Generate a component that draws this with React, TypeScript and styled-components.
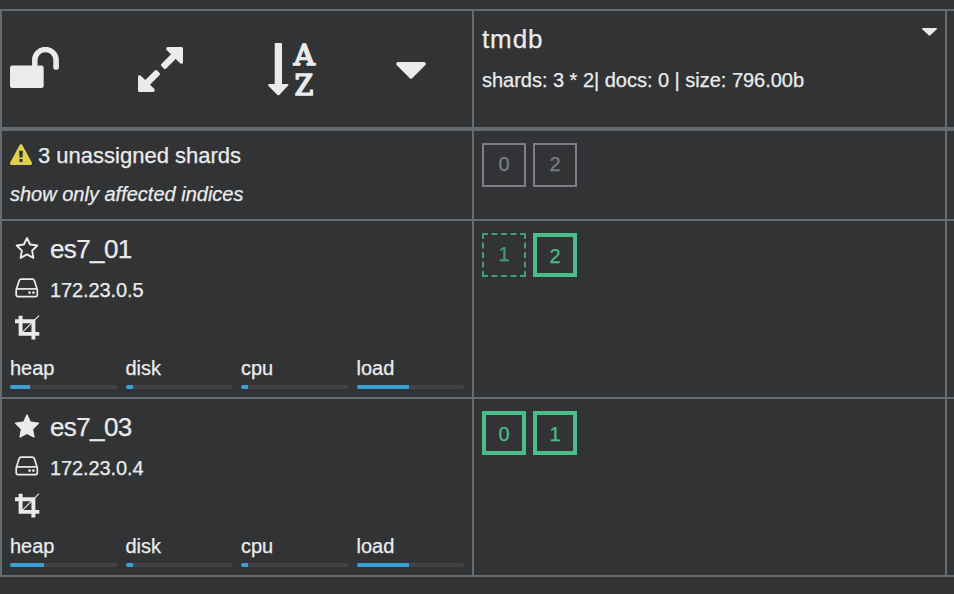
import React from "react";
import styled, { createGlobalStyle } from "styled-components";

const LINE = "#666b70";
const TEXT = "#eaebed";

const GlobalStyle = createGlobalStyle`
  * { box-sizing: border-box; }
  body {
    margin: 0;
    background: #323335;
    color: ${TEXT};
    font-family: "Liberation Sans", Arial, Helvetica, sans-serif;
    -webkit-text-stroke: 0.25px currentColor;
    overflow: hidden;
  }
  svg { display: block; flex: none; }
`;

const Page = styled.main`
  height: 594px;
  padding-top: 9px;
`;

const Grid = styled.div`
  display: grid;
  grid-template-columns: 472px 473px 1fr;
  grid-template-rows: 120px 90px 178px 178px;
  border-top: 2px solid ${LINE};
  border-left: 2px solid ${LINE};
`;

const Cell = styled.section<{ $head?: boolean; $last?: boolean }>`
  border-bottom: ${(p) => (p.$head ? 4 : 2)}px solid ${LINE};
  border-right: ${(p) => (p.$last ? 0 : 2)}px solid ${LINE};
  padding: 0 8px;
  min-width: 0;
`;

const Toolbar = styled.div`
  display: flex;
  align-items: flex-start;
  height: 116px;
`;

const Tool = styled.button<{ $width: number; $top: number }>`
  width: ${(p) => p.$width}px;
  padding: ${(p) => p.$top}px 0 0;
  border: 0;
  background: none;
  color: inherit;
`;

const IndexHead = styled.div`
  display: flex;
  justify-content: space-between;
  padding-top: 10px;
`;

const IndexName = styled.h2`
  margin: 0;
  font-size: 26px;
  font-weight: 400;
  line-height: 36px;
  letter-spacing: 0.9px;
`;

const MenuCaret = styled.button`
  width: 15px;
  height: 8px;
  margin: 7px 0 0;
  padding: 0;
  border: 0;
  background: none;
  color: inherit;
`;

const IndexStats = styled.p`
  margin: 9px 0 0;
  font-size: 20px;
  line-height: 28px;
  letter-spacing: -0.02px;
  white-space: nowrap;
`;

const Warning = styled.div`
  display: flex;
  align-items: flex-start;
  gap: 6px;
  padding-top: 10px;
  font-size: 22px;
  line-height: 30px;

  svg { margin-top: 3px; }
`;

const Filter = styled.div`
  margin-top: 10px;
  font-size: 20px;
  font-style: italic;
  line-height: 26px;
`;

const Shards = styled.div`
  display: flex;
  gap: 7px;
  padding-top: 12px;
`;

type Kind = "unassigned" | "replica" | "primary";

const shardBorder: Record<Kind, string> = {
  unassigned: "2px solid #7c7e87",
  replica: "2px dashed #429d76",
  primary: "4px solid #49be8b",
};

const Shard = styled.div<{ $kind: Kind }>`
  display: flex;
  align-items: center;
  justify-content: center;
  width: 44px;
  height: 44px;
  border: ${(p) => shardBorder[p.$kind]};
  color: ${(p) =>
    p.$kind === "unassigned" ? "#7c7e87" : p.$kind === "replica" ? "#429d76" : "#49be8b"};
  font-size: 20px;
  line-height: 20px;
  padding: ${(p) => (p.$kind === "primary" ? "2px 0 0" : "0 0 2px")};
`;

const NodeRows = styled.div`
  display: grid;
  grid-template-columns: 24px 1fr;
  grid-template-rows: 40px 40px 38px;
  column-gap: 11px;
  align-items: center;
  padding: 7px 0 0 5px;
`;

const NodeName = styled.div`
  padding-top: 2px;
  font-size: 26px;
  line-height: 34px;
  letter-spacing: -0.6px;
`;

const NodeHost = styled.div`
  padding-top: 4px;
  font-size: 20px;
  line-height: 28px;
  letter-spacing: -0.1px;
`;

const Meters = styled.div`
  display: grid;
  grid-template-columns: repeat(4, 107.5px);
  column-gap: 8px;
  padding-top: 7px;
`;

const MeterLabel = styled.div`
  font-size: 20px;
  line-height: 30px;
`;

const Track = styled.div`
  height: 4px;
  margin-top: 2px;
  border-radius: 2px;
  background: #424345;
  overflow: hidden;
`;

const Fill = styled.div`
  height: 4px;
  background: #3a9fd8;
`;

const LockOpen = () => (
  <svg width="50" height="42" viewBox="0 0 50 42" fill="currentColor">
    <rect x="0" y="18.5" width="33.7" height="22.5" rx="2.2" />
    <path
      d="M24.8 20V13.2a10.6 10.6 0 0 1 21.3 0V20"
      fill="none"
      stroke="currentColor"
      strokeWidth="5.5"
    />
    <rect x="43.35" y="17" width="5.5" height="5.7" rx="2" />
  </svg>
);

const ARROW =
  "M29.5 0H43.5Q45 0 45 1.5V15.5Q44.2 17.4 42.5 16.4L37.7 12L28.2 21.5Q27 22.6 25.8 21.5L23.4 19.1Q22.4 18 23.4 16.9L33 7.3L28.6 2.9Q27.4 1 29.5 0Z";

const Expand = () => (
  <svg width="46" height="46" viewBox="0 0 46 46" fill="currentColor">
    <path d={ARROW} />
    <path d={ARROW} transform="rotate(180 22.5 22.5)" />
  </svg>
);

const SortGlyph = styled.text`
  font-family: "DejaVu Serif", serif;
  font-weight: 400;
  font-size: 28px;
  stroke: currentColor;
  stroke-width: 1.7px;
  -webkit-text-stroke: 1.7px currentColor;
`;

const SortAZ = () => (
  <svg width="50" height="54" viewBox="0 0 50 54" fill="currentColor">
    <path d="M7.5 0H13.2Q14 0 14 .8V41H19.7Q21 41.4 20.2 42.6L11.2 51.9Q10.3 52.6 9.4 51.9L.3 42.8Q-.3 41.4 .9 41H6.7V.8Q6.7 0 7.5 0Z" />
    <SortGlyph x="25.8" y="21.7" textLength="21" lengthAdjust="spacingAndGlyphs">A</SortGlyph>
    <SortGlyph x="26.8" y="51.7" textLength="18.5" lengthAdjust="spacingAndGlyphs">Z</SortGlyph>
  </svg>
);

const Caret = ({ width = 30, height = 17 }: { width?: number; height?: number }) => (
  <svg
    width={width}
    height={height}
    viewBox="0 0 30 17"
    preserveAspectRatio="none"
    fill="currentColor"
  >
    <path d="M1.6 0H28.4Q30.6 .9 29.4 2.9L16.2 16.2Q15 17.2 13.8 16.2L.6 2.9Q-.6 .9 1.6 0Z" />
  </svg>
);

const Alert = () => (
  <svg width="22" height="21" viewBox="0 0 22 21">
    <path
      d="M9.7.9Q11 -.7 12.3 .9L21.8 18.5Q22.6 20.5 20.4 21H1.6Q-.6 20.5 .2 18.5Z"
      fill="#dfd150"
    />
    <path d="M9.1 6.7H12.9L12.5 13.4H9.5ZM9.5 15H12.5V18H9.5Z" fill="#323335" />
  </svg>
);

const Star = ({ filled }: { filled: boolean }) =>
  filled ? (
    <svg width="24" height="24" viewBox="0 0 24 24" fill="currentColor">
      <path d="M11.3 .9Q12 -.3 12.7 .9L15.7 7.6L23.3 8.6Q24.7 9 23.6 10.1L18.2 15.3L19.6 22.7Q19.6 24 18.4 23.4L12 19.9L5.6 23.4Q4.4 24 4.4 22.7L5.8 15.3L.4 10.1Q-.7 9 .7 8.6L8.3 7.6Z" />
    </svg>
  ) : (
    <svg width="24" height="24" viewBox="0 0 24 24" fill="none">
      <path
        d="M12 2L15.1 8.5L22.3 9.5L17.1 14.6L18.4 21.8L12 18.4L5.6 21.8L6.9 14.6L1.7 9.5L8.9 8.5Z"
        stroke="currentColor"
        strokeWidth="1.9"
        strokeLinejoin="round"
      />
    </svg>
  );

const Drive = () => (
  <svg width="24" height="20" viewBox="0 0 24 20" fill="none" stroke="currentColor" strokeWidth="1.7">
    <path d="M1.2 11.8L4.1 2.7Q4.6 1.2 6.2 1.2H17.3Q18.9 1.2 19.4 2.7L22.3 11.8V16.8Q22.3 18.7 20.4 18.7H3.1Q1.2 18.7 1.2 16.8Z" />
    <path d="M1.8 10.9H21.7" />
    <g fill="currentColor" stroke="none">
      <circle cx="14.6" cy="14.6" r="1.3" />
      <circle cx="18.4" cy="14.6" r="1.3" />
    </g>
  </svg>
);

const Crop = () => (
  <svg width="25" height="25" viewBox="0 0 25 25" fill="none" stroke="currentColor">
    <path d="M0 6.2H18.4V24.6M5.6 .7V18.9H24.3" strokeWidth="3.9" />
    <path d="M7 17.7L24 .7" strokeWidth="1.1" />
  </svg>
);

interface NodeInfo {
  name: string;
  host: string;
  master: boolean;
  meters: [string, number][];
  shards: [number, Kind][];
}

const nodes: NodeInfo[] = [
  {
    name: "es7_01",
    host: "172.23.0.5",
    master: false,
    meters: [["heap", 18.6], ["disk", 7.4], ["cpu", 6.6], ["load", 48.4]],
    shards: [[1, "replica"], [2, "primary"]],
  },
  {
    name: "es7_03",
    host: "172.23.0.4",
    master: true,
    meters: [["heap", 31.6], ["disk", 7.4], ["cpu", 6.6], ["load", 48.4]],
    shards: [[0, "primary"], [1, "primary"]],
  },
];

const ShardList = ({ items }: { items: [number, Kind][] }) => (
  <Shards>
    {items.map(([id, kind]) => (
      <Shard key={id} $kind={kind}>{id}</Shard>
    ))}
  </Shards>
);

export default function App() {
  return (
    <Page>
      <GlobalStyle />
      <Grid>
        <Cell $head>
          <Toolbar>
            <Tool $width={128} $top={36}><LockOpen /></Tool>
            <Tool $width={130} $top={36}><Expand /></Tool>
            <Tool $width={128} $top={32}><SortAZ /></Tool>
            <Tool $width={30} $top={51}><Caret /></Tool>
          </Toolbar>
        </Cell>
        <Cell $head>
          <IndexHead>
            <IndexName>tmdb</IndexName>
            <MenuCaret><Caret width={15} height={8} /></MenuCaret>
          </IndexHead>
          <IndexStats>shards: 3 * 2| docs: 0 | size: 796.00b</IndexStats>
        </Cell>
        <Cell $head $last />

        <Cell>
          <Warning><Alert />3 unassigned shards</Warning>
          <Filter>show only affected indices</Filter>
        </Cell>
        <Cell><ShardList items={[[0, "unassigned"], [2, "unassigned"]]} /></Cell>
        <Cell $last />

        {nodes.map((node) => (
          <React.Fragment key={node.name}>
            <Cell>
              <NodeRows>
                <Star filled={node.master} />
                <NodeName>{node.name}</NodeName>
                <Drive />
                <NodeHost>{node.host}</NodeHost>
                <Crop />
              </NodeRows>
              <Meters>
                {node.meters.map(([label, value]) => (
                  <div key={label}>
                    <MeterLabel>{label}</MeterLabel>
                    <Track><Fill style={{ width: `${value}%` }} /></Track>
                  </div>
                ))}
              </Meters>
            </Cell>
            <Cell><ShardList items={node.shards} /></Cell>
            <Cell $last />
          </React.Fragment>
        ))}
      </Grid>
    </Page>
  );
}
